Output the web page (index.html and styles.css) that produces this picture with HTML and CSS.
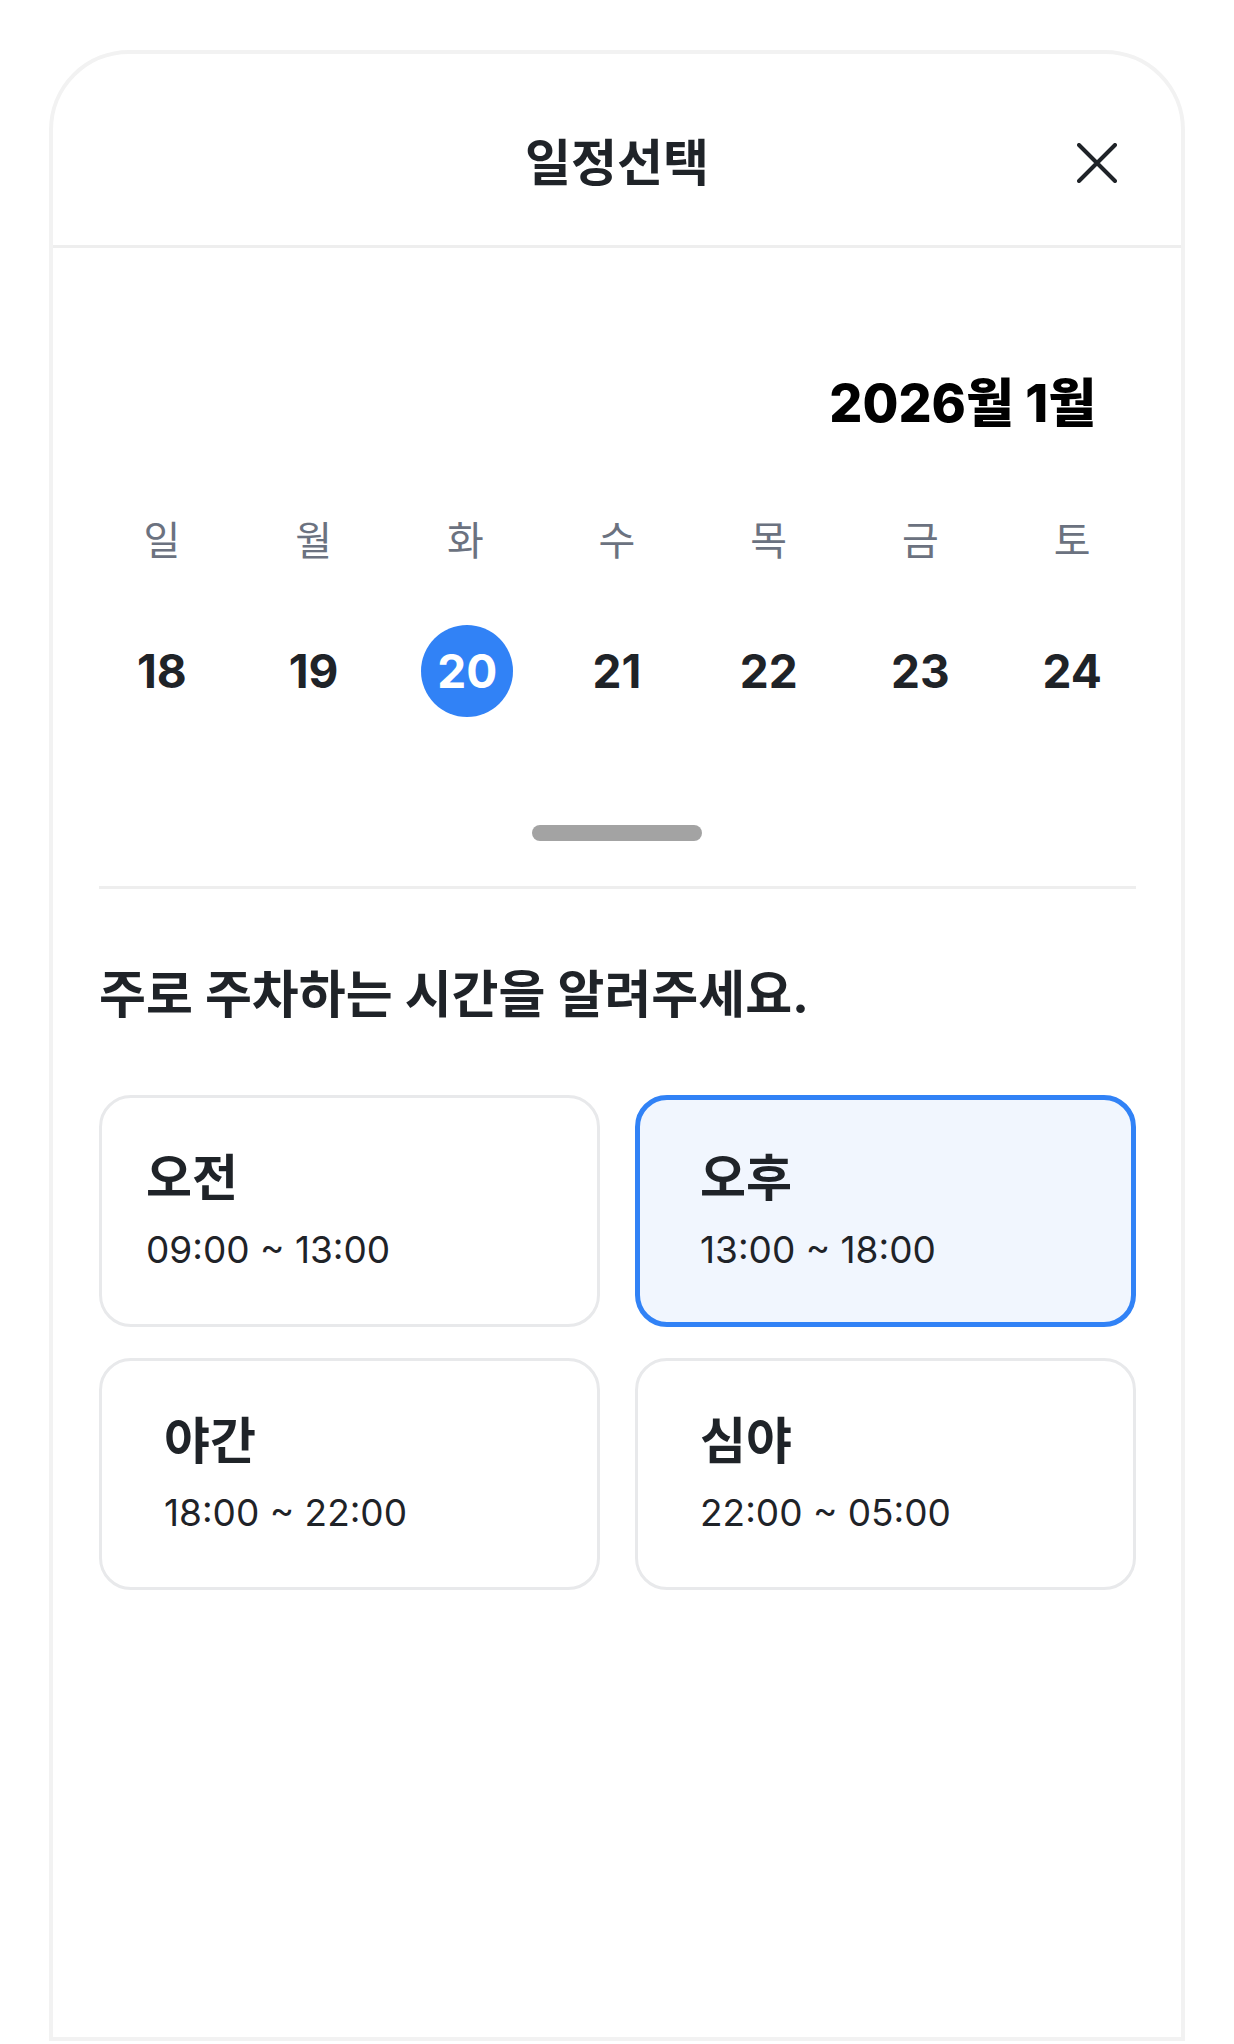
FILE: index.html
```html
<!DOCTYPE html>
<html lang="ko">
<head>
    <meta charset="UTF-8">
    <meta name="viewport" content="width=device-width, initial-scale=1.0">
    <title>일정선택</title>
    <link rel="stylesheet" href="styles.css">
</head>
<body>
    <div class="sheet">
        <div class="sheet-header">
            <span></span>
            <h1>일정선택</h1>
            <button class="close-btn" aria-label="닫기">
                <svg width="40" height="40" viewBox="0 0 40 40">
                    <path d="M2 2 L38 38 M38 2 L2 38" stroke="#1f2328" stroke-width="4" stroke-linecap="round" fill="none"/>
                </svg>
            </button>
        </div>

        <div class="calendar">
            <div class="month-title">2026월 1월</div>
            <div class="week-row">
                <span>일</span><span>월</span><span>화</span><span>수</span><span>목</span><span>금</span><span>토</span>
            </div>
            <div class="date-row">
                <span class="date">18</span>
                <span class="date">19</span>
                <span class="date selected">20</span>
                <span class="date">21</span>
                <span class="date">22</span>
                <span class="date">23</span>
                <span class="date">24</span>
            </div>
            <div class="handle"></div>
        </div>

        <div class="time-section">
            <h2>주로 주차하는 시간을 알려주세요.</h2>
            <div class="time-grid">
                <div class="time-card first">
                    <strong>오전</strong>
                    <span>09:00 ~ 13:00</span>
                </div>
                <div class="time-card active">
                    <strong>오후</strong>
                    <span>13:00 ~ 18:00</span>
                </div>
                <div class="time-card">
                    <strong>야간</strong>
                    <span>18:00 ~ 22:00</span>
                </div>
                <div class="time-card">
                    <strong>심야</strong>
                    <span>22:00 ~ 05:00</span>
                </div>
            </div>
        </div>
    </div>
</body>
</html>
```

FILE: styles.css
```css
* {
    margin: 0;
    padding: 0;
    box-sizing: border-box;
}

body {
    font-family: Inter, 'Noto Sans CJK KR', sans-serif;
    background: #ffffff;
    color: #1f2328;
    padding: 50px 49px 3px;
}

.sheet {
    height: 1991px;
    border: 4px solid #f2f2f2;
    border-radius: 80px 80px 0 0;
    background: #ffffff;
}

/* header */
.sheet-header {
    display: grid;
    grid-template-columns: 1fr auto 1fr;
    align-items: center;
    padding: 79px 0 52px;
    border-bottom: 3px solid #eeeeee;
}

.sheet-header h1 {
    font-size: 50px;
    line-height: 60px;
    font-weight: 700;
    color: #1f2328;
}

.close-btn {
    justify-self: end;
    margin-right: 62px;
    width: 44px;
    height: 44px;
    border: none;
    background: none;
    display: flex;
    align-items: center;
    justify-content: center;
    cursor: pointer;
}

/* calendar */
.calendar {
    padding: 126px 33px 0;
}

.month-title {
    text-align: right;
    padding-right: 52px;
    font-size: 52px;
    line-height: 60px;
    font-weight: 800;
    color: #000000;
}

.week-row,
.date-row {
    display: grid;
    grid-template-columns: repeat(7, 1fr);
    justify-items: center;
    align-items: center;
}

.week-row {
    margin-top: 82px;
    font-size: 40px;
    line-height: 50px;
    color: #6b7280;
}

.date-row {
    margin-top: 59px;
}

.date {
    width: 92px;
    height: 92px;
    border-radius: 50%;
    display: flex;
    align-items: center;
    justify-content: center;
    font-size: 46px;
    font-weight: 700;
    color: #1f2328;
}

.date.selected {
    margin-left: 4px;
    background: #3182f6;
    color: #ffffff;
}

.handle {
    width: 170px;
    height: 16px;
    margin: 108px auto 0;
    border-radius: 8px;
    background: #a3a3a3;
}

/* time slots */
.time-section {
    margin: 45px 45px 0 46px;
    padding-top: 76px;
    border-top: 3px solid #eeeeee;
}

.time-section h2 {
    font-size: 51px;
    line-height: 60px;
    font-weight: 700;
    color: #1f2328;
}

.time-grid {
    margin-top: 70px;
    display: grid;
    grid-template-columns: 1fr 1fr;
    gap: 31px 35px;
}

.time-card {
    height: 232px;
    padding: 0 40px 0 62px;
    border: 3px solid #e8e9eb;
    border-radius: 32px;
    display: flex;
    flex-direction: column;
    justify-content: center;
    gap: 22px;
    background: #ffffff;
}

.time-card.first {
    padding-left: 44px;
}

.time-card.active {
    padding-left: 60px;
    border: 5px solid #3182f6;
    background: #f1f6fe;
}

.time-card strong {
    font-size: 50px;
    line-height: 56px;
    font-weight: 700;
}

.time-card span {
    font-size: 37px;
    line-height: 44px;
    color: #1f2328;
}
```
